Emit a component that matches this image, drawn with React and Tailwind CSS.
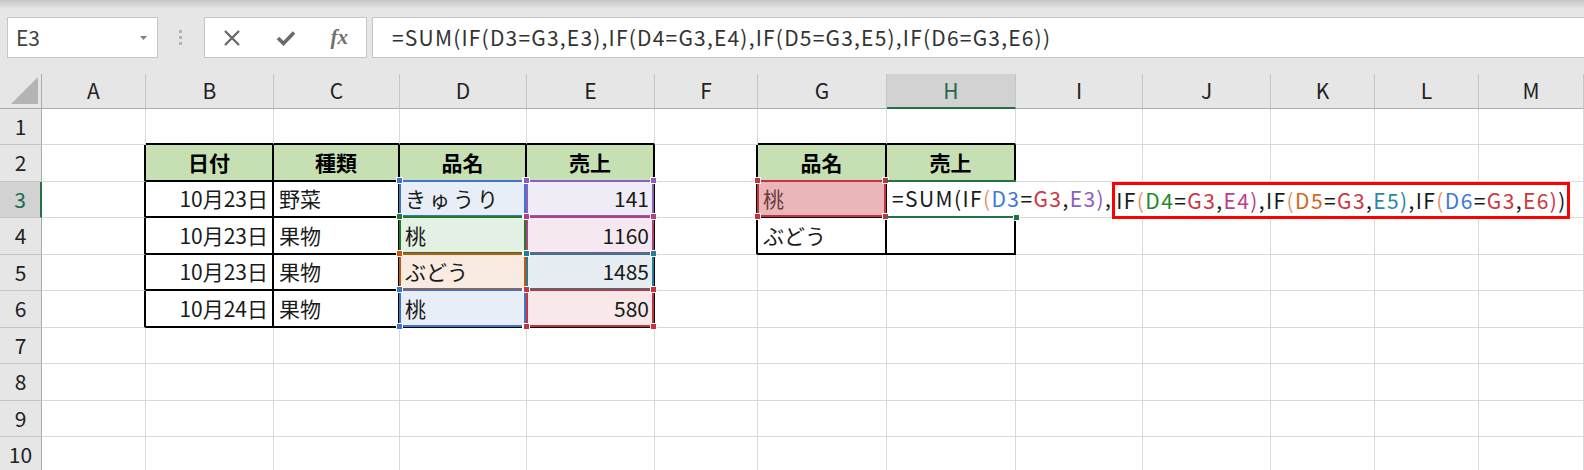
import React from 'react';

const COLS = ['A', 'B', 'C', 'D', 'E', 'F', 'G', 'H', 'I', 'J', 'K', 'L', 'M'];
const GRID =
  'grid grid-cols-[42px_104px_128px_126px_127px_128px_103px_129px_129px_127px_128px_104px_104px_105px]';
const ROW_H = ['h-[36px]', 'h-[37px]', 'h-[36px]', 'h-[37px]', 'h-[36px]', 'h-[37px]', 'h-[36px]', 'h-[37px]', 'h-[36px]', 'h-[37px]'];

// cell contents
const CELLS = {
  B2: { t: '日付', head: true }, C2: { t: '種類', head: true }, D2: { t: '品名', head: true }, E2: { t: '売上', head: true },
  G2: { t: '品名', head: true }, H2: { t: '売上', head: true },
  B3: { t: '10月23日', right: true }, C3: { t: '野菜' }, D3: { t: 'きゅうり', kana: true }, E3: { t: '141', right: true }, G3: { t: '桃', tint: true },
  B4: { t: '10月23日', right: true }, C4: { t: '果物' }, D4: { t: '桃' }, E4: { t: '1160', right: true }, G4: { t: 'ぶどう' },
  B5: { t: '10月23日', right: true }, C5: { t: '果物' }, D5: { t: 'ぶどう' }, E5: { t: '1485', right: true },
  B6: { t: '10月24日', right: true }, C6: { t: '果物' }, D6: { t: '桃' }, E6: { t: '580', right: true },
};

// highlighted references while editing H3
const RANGES = {
  D3: { border: 'border-[#3e74c9]', fill: 'bg-[#e8eef8]', handle: 'bg-[#3e74c9]' },
  E3: { border: 'border-[#8b5ebf]', fill: 'bg-[#efecf6]', handle: 'bg-[#8b5ebf]' },
  D4: { border: 'border-[#1f7a2a]', fill: 'bg-[#e3f0e4]', handle: 'bg-[#1f7a2a]' },
  E4: { border: 'border-[#b0417f]', fill: 'bg-[#f6e8f0]', handle: 'bg-[#b0417f]' },
  D5: { border: 'border-[#c25a0e]', fill: 'bg-[#f9ebe2]', handle: 'bg-[#c25a0e]' },
  E5: { border: 'border-[#2a7b98]', fill: 'bg-[#e6eef3]', handle: 'bg-[#2a7b98]' },
  D6: { border: 'border-[#3e74c9]', fill: 'bg-[#e8eef8]', handle: 'bg-[#3e74c9]' },
  E6: { border: 'border-[#c5343e]', fill: 'bg-[#f8e8e9]', handle: 'bg-[#c5343e]' },
  G3: { border: 'border-[#c5343e]', fill: 'bg-[#eab6ba]', handle: 'bg-[#c5343e]' },
};

const K = 'text-[#1a1a1a]';
const P = 'text-[#e9956b]';
const BLUE = 'text-[#3e78d6]';
const RED = 'text-[#d0343c]';
const PURPLE = 'text-[#8e5cc4]';
const GREEN = 'text-[#1a8a2a]';
const MAG = 'text-[#c03c8a]';
const ORANGE = 'text-[#d2691e]';
const TEAL = 'text-[#2e86a8]';

const SEG1 = [
  ['=SUM(IF', K], ['(', P], ['D3', BLUE], ['=', K], ['G3', RED], [',', K], ['E3', PURPLE], [')', PURPLE], [',', K],
];
const SEG2 = [
  ['IF', K], ['(', P], ['D4', GREEN], ['=', K], ['G3', RED], [',', K], ['E4', MAG], [')', MAG], [',', K],
  ['IF', K], ['(', P], ['D5', ORANGE], ['=', K], ['G3', RED], [',', K], ['E5', TEAL], [')', TEAL], [',', K],
  ['IF', K], ['(', P], ['D6', BLUE], ['=', K], ['G3', RED], [',', K], ['E6', RED], [')', RED], [')', K],
];

const FORMULA = '=SUM(IF(D3=G3,E3),IF(D4=G3,E4),IF(D5=G3,E5),IF(D6=G3,E6))';

const inTable = (c, r) => (c >= 2 && c <= 5 && r >= 2 && r <= 6) || (c >= 7 && c <= 8 && r >= 2 && r <= 4);

function Handle({ pos, color }) {
  return <span className={`absolute w-[7px] h-[7px] border border-white ${pos} ${color}`} />;
}

function RangeBox({ range }) {
  return (
    <div className={`pointer-events-none absolute -top-[2px] -left-[1px] -right-[1px] -bottom-[1px] z-20 border-2 ${range.border}`}>
      <Handle pos="-left-[5px] -top-[5px]" color={range.handle} />
      <Handle pos="-right-[5px] -top-[5px]" color={range.handle} />
      <Handle pos="-left-[5px] -bottom-[5px]" color={range.handle} />
      <Handle pos="-right-[5px] -bottom-[5px]" color={range.handle} />
    </div>
  );
}

function EditOverflow() {
  return (
    <>
      <div className="absolute left-0 top-0 bottom-0 z-10 w-max flex items-stretch bg-white pl-[5px] pr-[4px] whitespace-nowrap text-[21px] tracking-[1.4px]">
        <span className="flex items-center">
          {SEG1.map(([t, c], i) => (
            <span key={i} className={c}>{t}</span>
          ))}
        </span>
        <span className="flex items-center -mb-[3px] border-[3px] border-[#ff0000] pl-[1px]">
          {SEG2.map(([t, c], i) => (
            <span key={i} className={c}>{t}</span>
          ))}
        </span>
      </div>
      <div className="pointer-events-none absolute -top-[2px] left-0 -right-[2px] -bottom-[2px] z-20 border-y-2 border-[#217346]">
        <span className="absolute -right-[4px] -bottom-[5px] w-[7px] h-[7px] border border-white bg-[#217346]" />
      </div>
    </>
  );
}

function Cell({ c, r }) {
  const key = COLS[c - 1] + r;
  const data = CELLS[key];
  const range = RANGES[key];
  const right = inTable(c, r) || inTable(c + 1, r) ? 'border-r-2 border-r-black' : 'border-r border-r-[#d9d9d9]';
  const bottom = inTable(c, r) || inTable(c, r + 1) ? 'border-b-2 border-b-black' : 'border-b border-b-[#d9d9d9]';
  const bg = range ? range.fill : data && data.head ? 'bg-[#c6e0b4]' : 'bg-white';
  let align = 'justify-start pl-[5px]';
  if (data && data.head) align = 'justify-center';
  if (data && data.right) align = 'justify-end pr-[4px]';

  return (
    <div className={`relative flex items-center min-w-0 ${right} ${bottom} ${bg} ${align}`}>
      {data && (
        <span
          className={`whitespace-nowrap text-[21px] ${data.kana ? 'tracking-[3px]' : ''} ${
            data.head ? 'font-bold text-black' : data.tint ? 'text-[#6e3a3a]' : 'text-[#1a1a1a]'
          }`}
        >
          {data.t}
        </span>
      )}
      {range && <RangeBox range={range} />}
      {key === 'H3' && <EditOverflow />}
    </div>
  );
}

function Toolbar() {
  return (
    <div className="h-[74px] bg-[#e6e6e6]">
      <div className="h-[9px] bg-linear-to-b from-[#c6c6c6] to-[#e6e6e6]" />
      <div className="flex items-start pl-[7px] pt-[8px]">
        <div className="w-[151px] h-[41px] border border-[#c6c6c6] bg-white flex items-center justify-between pl-[8px] pr-[10px]">
          <span className="text-[21px] text-[#444]">E3</span>
          <svg width="7" height="4" viewBox="0 0 7 4">
            <polygon points="0,0 7,0 3.5,4" fill="#808080" />
          </svg>
        </div>
        <div className="ml-[21px] mt-[13px] flex flex-col gap-[3px]">
          <span className="w-[3px] h-[3px] bg-[#b5b5b5]" />
          <span className="w-[3px] h-[3px] bg-[#b5b5b5]" />
          <span className="w-[3px] h-[3px] bg-[#b5b5b5]" />
        </div>
        <div className="ml-[22px] w-[163px] h-[41px] border border-[#c6c6c6] bg-white flex items-center">
          <div className="w-[54px] flex justify-center">
            <svg width="18" height="16" viewBox="0 0 18 16">
              <path d="M2 1 L16 15 M16 1 L2 15" stroke="#6b6b6b" strokeWidth="2.4" />
            </svg>
          </div>
          <div className="w-[54px] flex justify-center">
            <svg width="20" height="16" viewBox="0 0 20 16">
              <path d="M2 8 L7.5 13.5 L18 2.5" stroke="#6b6b6b" strokeWidth="3.6" fill="none" />
            </svg>
          </div>
          <div className="w-[54px] flex justify-center">
            <span className="font-['Liberation_Serif',serif] italic font-bold text-[21px] leading-none text-[#707070]">fx</span>
          </div>
        </div>
        <div className="ml-[5px] flex-1 h-[41px] border border-r-0 border-[#c6c6c6] bg-white flex items-center pl-[19px]">
          <span className="whitespace-nowrap text-[21px] tracking-[1.2px] text-[#333]">{FORMULA}</span>
        </div>
      </div>
    </div>
  );
}

function ColumnHeader() {
  return (
    <div className={`${GRID} h-[35px] bg-[#e6e6e6]`}>
      <div className="flex items-end justify-end pr-[3px] pb-[4px] border-r border-r-[#ababab] border-b border-b-[#ababab]">
        <svg width="27" height="27" viewBox="0 0 27 27">
          <polygon points="27,0 27,27 0,27" fill="#b4b4b4" />
        </svg>
      </div>
      {COLS.map((col) => (
        <div
          key={col}
          className={`flex items-center justify-center border-r border-r-[#c6c6c6] text-[21px] ${
            col === 'H' ? 'bg-[#d2d2d2] border-b-2 border-b-[#217346] text-[#1d6b4a]' : 'border-b border-b-[#ababab] text-[#222]'
          }`}
        >
          {col}
        </div>
      ))}
    </div>
  );
}

export default function App() {
  const rows = [1, 2, 3, 4, 5, 6, 7, 8, 9, 10];
  return (
    <div className="w-[1584px] h-[470px] overflow-hidden bg-white font-['Noto_Sans_CJK_JP',sans-serif]">
      <Toolbar />
      <ColumnHeader />
      {rows.map((r, i) => (
        <div key={r} className={`${GRID} ${ROW_H[i]}`}>
          <div
            className={`flex items-center justify-center border-b border-b-[#c6c6c6] text-[21px] ${
              r === 3 ? 'bg-[#d2d2d2] border-r-2 border-r-[#217346] text-[#1d6b4a]' : 'bg-[#e6e6e6] border-r border-r-[#ababab] text-[#222]'
            }`}
          >
            {r}
          </div>
          {COLS.map((col, ci) => (
            <Cell key={col} c={ci + 1} r={r} />
          ))}
        </div>
      ))}
    </div>
  );
}
